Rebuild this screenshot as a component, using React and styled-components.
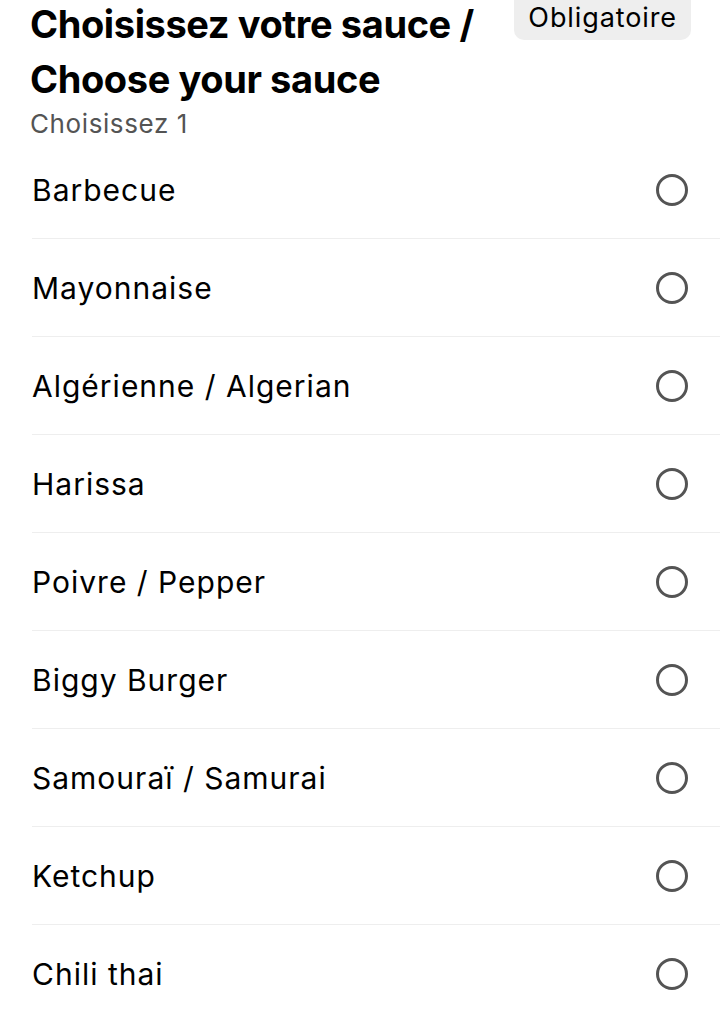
import React from 'react'
import styled, { createGlobalStyle } from 'styled-components'

const GlobalStyle = createGlobalStyle`
  html, body {
    margin: 0;
    padding: 0;
    background: #ffffff;
  }
  body {
    font-family: Inter, "Noto Sans", "Liberation Sans", sans-serif;
    color: #000000;
  }
`

const Page = styled.div`
  width: 720px;
  margin-top: -12px;
`

const Header = styled.div`
  display: flex;
  align-items: flex-start;
  justify-content: space-between;
  padding: 0 29px 0 30px;
`

const TitleBlock = styled.div`
  display: flex;
  flex-direction: column;
  padding-top: 9px;
`

const Title = styled.h1`
  margin: 0;
  width: 470px;
  font-size: 38px;
  font-weight: 700;
  line-height: 55px;
  letter-spacing: -0.4px;
`

const Subtitle = styled.div`
  font-size: 26px;
  line-height: 30px;
  letter-spacing: 0.6px;
  color: #545454;
  margin-top: 2px;
`

const Badge = styled.span`
  background: #eeeeee;
  border-radius: 10px;
  padding: 15px 14px 7px;
  font-size: 27px;
  line-height: 30px;
  letter-spacing: 0.9px;
  white-space: nowrap;
`

const List = styled.ul`
  list-style: none;
  margin: 2px 0 0 32px;
  padding: 0;
`

const Row = styled.li`
  display: flex;
  align-items: center;
  justify-content: space-between;
  height: 98px;
  padding-right: 32px;
  border-bottom: ${p => (p.last ? 'none' : '1.5px solid #eeeeee')};
  box-sizing: border-box;
`

const Label = styled.span`
  font-size: 30px;
  line-height: 34px;
  letter-spacing: 1px;
`

const Radio = styled.span`
  width: 32px;
  height: 32px;
  border-radius: 50%;
  border: 3.5px solid #545454;
  box-sizing: border-box;
`

const sauces = [
  'Barbecue',
  'Mayonnaise',
  'Algérienne / Algerian',
  'Harissa',
  'Poivre / Pepper',
  'Biggy Burger',
  'Samouraï / Samurai',
  'Ketchup',
  'Chili thai',
]

export default function App() {
  return (
    <Page>
      <GlobalStyle />
      <Header>
        <TitleBlock>
          <Title>Choisissez votre sauce / Choose your sauce</Title>
          <Subtitle>Choisissez 1</Subtitle>
        </TitleBlock>
        <Badge>Obligatoire</Badge>
      </Header>
      <List>
        {sauces.map((s, i) => (
          <Row key={s} last={i === sauces.length - 1}>
            <Label>{s}</Label>
            <Radio />
          </Row>
        ))}
      </List>
    </Page>
  )
}
